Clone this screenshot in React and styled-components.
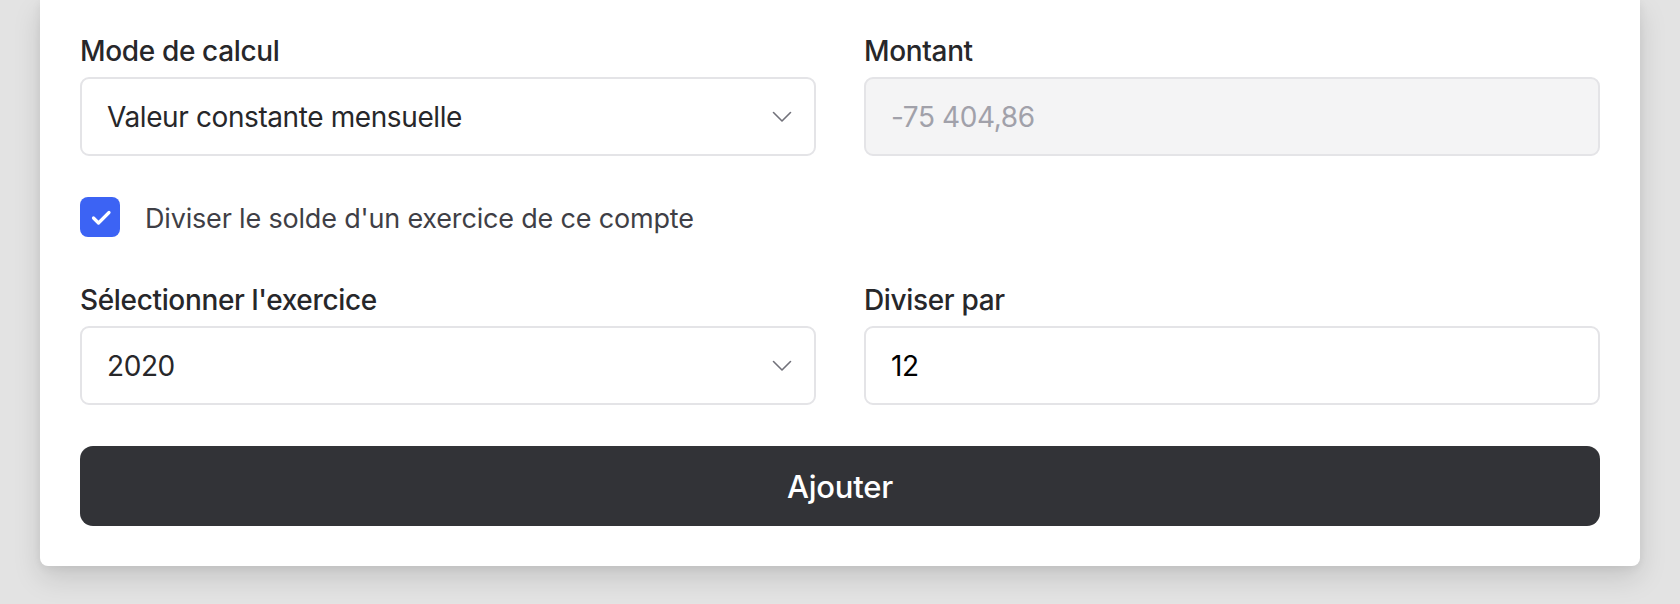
import React from "react";
import styled, { createGlobalStyle } from "styled-components";

const Global = createGlobalStyle`
  * { box-sizing: border-box; }
  html, body { margin: 0; padding: 0; }
  body {
    background: #e3e3e3;
    font-family: Inter, "Noto Sans", "Liberation Sans", sans-serif;
    height: 604px;
    overflow: hidden;
  }
`;

const Page = styled.div`
  padding: 0 40px;
`;

const Card = styled.form`
  background: #ffffff;
  border-radius: 0 0 8px 8px;
  padding: 33px 40px 40px;
  box-shadow: 0 12px 28px rgba(0, 0, 0, 0.13), 0 2px 10px rgba(0, 0, 0, 0.06);
  display: flex;
  flex-direction: column;
`;

const Row = styled.div`
  display: grid;
  grid-template-columns: 1fr 1fr;
  column-gap: 48px;
  margin-top: ${(p) => p.$mt || 0}px;
`;

const Field = styled.div`
  display: flex;
  flex-direction: column;
  gap: 8px;
`;

const Label = styled.label`
  font-size: 28px;
  line-height: 36px;
  font-weight: 500;
  color: #27272a;
  letter-spacing: -0.35px;
`;

const Box = styled.div`
  height: 79px;
  border: 2px solid #e4e4e7;
  border-radius: 9px;
  background: ${(p) => (p.$disabled ? "#f4f4f5" : "#ffffff")};
  display: flex;
  align-items: center;
  justify-content: space-between;
  padding: 0 22px 0 25px;
`;

const Value = styled.span`
  font-size: 28px;
  letter-spacing: -0.4px;
  color: ${(p) => p.$color || "#27272a"};
`;

const Chevron = styled.svg`
  width: 20px;
  height: 12px;
  flex: none;
`;

const CheckRow = styled.label`
  display: flex;
  align-items: center;
  gap: 25px;
  margin-top: 41px;
  height: 40px;
`;

const CheckBox = styled.span`
  width: 40px;
  height: 40px;
  border-radius: 8px;
  background: #3c63f4;
  display: flex;
  align-items: center;
  justify-content: center;
  flex: none;
`;

const CheckText = styled.span`
  font-size: 27px;
  letter-spacing: -0.18px;
  color: #3f3f46;
  padding-top: 3px;
`;

const Button = styled.button`
  margin-top: 41px;
  height: 80px;
  border: none;
  border-radius: 13px;
  background: #323337;
  color: #ffffff;
  font-family: inherit;
  font-size: 31px;
  font-weight: 500;
  letter-spacing: -0.2px;
  cursor: pointer;
`;

const ChevronIcon = () => (
  <Chevron viewBox="0 0 20 12">
    <path d="M1.5 1.5 L10 10 L18.5 1.5" fill="none" stroke="#71717a" strokeWidth="1.6" strokeLinecap="round" strokeLinejoin="round" />
  </Chevron>
);

export default function App() {
  return (
    <Page>
      <Global />
      <Card onSubmit={(e) => e.preventDefault()}>
        <Row>
          <Field>
            <Label>Mode de calcul</Label>
            <Box>
              <Value>Valeur constante mensuelle</Value>
              <ChevronIcon />
            </Box>
          </Field>
          <Field>
            <Label>Montant</Label>
            <Box $disabled>
              <Value $color="#a1a1aa">-75 404,86</Value>
            </Box>
          </Field>
        </Row>
        <CheckRow>
          <CheckBox>
            <svg width="40" height="40" viewBox="0 0 40 40">
              <path d="M13.5 21 L18.5 26 L29 15.5" fill="none" stroke="#ffffff" strokeWidth="3.2" strokeLinecap="round" strokeLinejoin="round" />
            </svg>
          </CheckBox>
          <CheckText>Diviser le solde d'un exercice de ce compte</CheckText>
        </CheckRow>
        <Row $mt={45}>
          <Field>
            <Label>Sélectionner l'exercice</Label>
            <Box>
              <Value>2020</Value>
              <ChevronIcon />
            </Box>
          </Field>
          <Field>
            <Label>Diviser par</Label>
            <Box>
              <Value $color="#000000">12</Value>
            </Box>
          </Field>
        </Row>
        <Button type="submit">Ajouter</Button>
      </Card>
    </Page>
  );
}
